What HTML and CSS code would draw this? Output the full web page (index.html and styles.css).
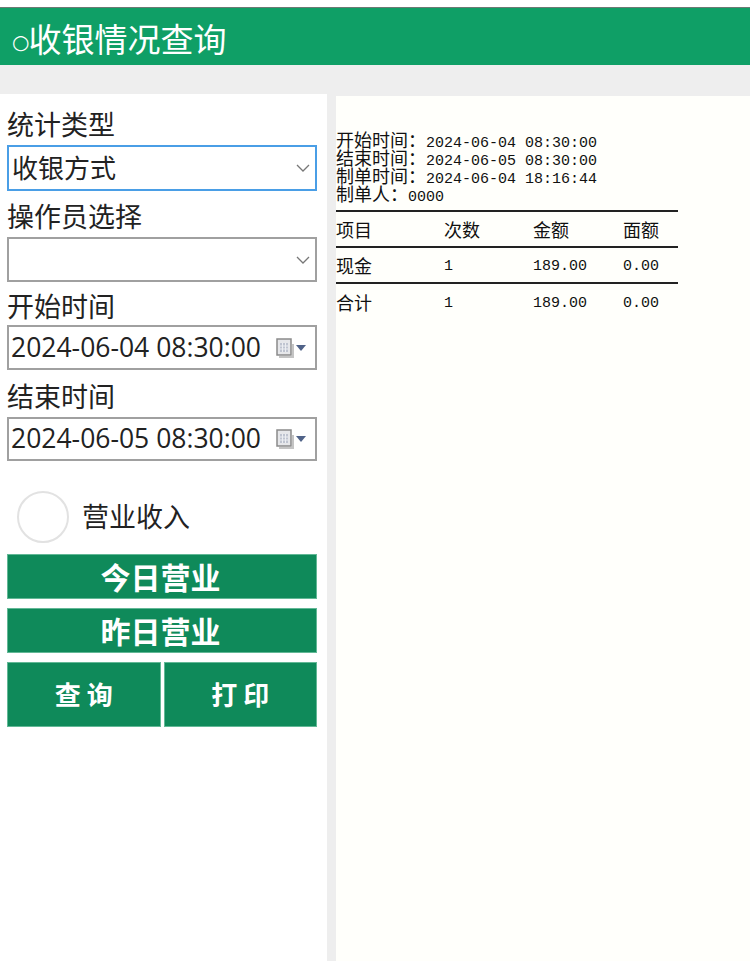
FILE: index.html
```html
<!DOCTYPE html>
<html lang="zh-CN">
<head>
<meta charset="utf-8">
<title>收银情况查询</title>
<link rel="stylesheet" href="styles.css">
</head>
<body>
<header class="title-bar"><span class="ring">○</span>收银情况查询</header>
<main class="content">
  <aside class="side">
    <label class="field-label">统计类型</label>
    <div class="control control-focus control-select">
      <span class="value">收银方式</span>
      <svg class="chevron" viewBox="0 0 14 8"><path d="M1 1l6 6 6-6" fill="none" stroke="#777" stroke-width="1.3"/></svg>
    </div>
    <label class="field-label">操作员选择</label>
    <div class="control control-select control-short">
      <span class="value"></span>
      <svg class="chevron" viewBox="0 0 14 8"><path d="M1 1l6 6 6-6" fill="none" stroke="#777" stroke-width="1.3"/></svg>
    </div>
    <label class="field-label field-label-tight">开始时间</label>
    <div class="control control-date control-short">
      <span class="value">2024-06-04 08:30:00</span>
      <svg class="cal" viewBox="0 0 32 20">
        <path d="M3 19h14V6" fill="none" stroke="#c4c4c4" stroke-width="2"/>
        <rect x="1" y="1" width="14" height="16" fill="#e6e7ea" stroke="#8a8a8a" stroke-width="1.500"/>
        <path d="M4 5h8v9H4z" fill="#bfc4d0"/>
        <path d="M6.500 5v9M9.500 5v9M4 8h8M4 11h8" stroke="#eceef2"/>
        <path d="M20 7h10l-5 6z" fill="#4f6288"/>
      </svg>
    </div>
    <label class="field-label field-label-wide">结束时间</label>
    <div class="control control-date control-tiny">
      <span class="value">2024-06-05 08:30:00</span>
      <svg class="cal" viewBox="0 0 32 20">
        <path d="M3 19h14V6" fill="none" stroke="#c4c4c4" stroke-width="2"/>
        <rect x="1" y="1" width="14" height="16" fill="#e6e7ea" stroke="#8a8a8a" stroke-width="1.500"/>
        <path d="M4 5h8v9H4z" fill="#bfc4d0"/>
        <path d="M6.500 5v9M9.500 5v9M4 8h8M4 11h8" stroke="#eceef2"/>
        <path d="M20 7h10l-5 6z" fill="#4f6288"/>
      </svg>
    </div>
    <div class="radio-row"><span class="radio"></span><span class="value">营业收入</span></div>
    <button class="btn btn-wide btn-first">今日营业</button>
    <button class="btn btn-wide">昨日营业</button>
    <div class="btn-pair">
      <button class="btn btn-small">查 询</button>
      <button class="btn btn-small">打 印</button>
    </div>
  </aside>
  <section class="report">
    <div class="meta">
      <div>开始时间：<span class="latin">2024-06-04 08:30:00</span></div>
      <div>结束时间：<span class="latin">2024-06-05 08:30:00</span></div>
      <div>制单时间：<span class="latin">2024-06-04 18:16:44</span></div>
      <div>制单人：<span class="latin">0000</span></div>
    </div>
    <table class="grid">
      <tr><td class="c1">项目</td><td class="c2">次数</td><td class="c3">金额</td><td>面额</td></tr>
      <tr><td>现金</td><td class="latin">1</td><td class="latin">189.00</td><td class="latin">0.00</td></tr>
      <tr><td>合计</td><td class="latin">1</td><td class="latin">189.00</td><td class="latin">0.00</td></tr>
    </table>
  </section>
</main>
</body>
</html>
```
FILE: styles.css
```css
* { box-sizing: border-box; }
html, body { margin: 0; height: 100%; }
body {
  width: 750px;
  height: 961px;
  overflow: hidden;
  background: #eeeeee;
  font-family: "Noto Sans CJK SC", "Noto Sans", sans-serif;
  color: #222;
  display: flex;
  flex-direction: column;
  border-top: 7px solid #fff;
}
.title-bar {
  height: 58px;
  flex: none;
  background: #0f9f66;
  border-top: 1px solid #6d7a74;
  color: #fff;
  font-size: 33px;
  line-height: 60px;
  padding-left: 12px;
  white-space: nowrap;
}
.ring { font-size: 20px; font-family: "DejaVu Sans", sans-serif; vertical-align: 3px; margin-right: -1px; }
.content {
  flex: 1;
  margin-top: 29px;
  display: flex;
  gap: 9px;
  min-height: 0;
}
.side {
  width: 327px;
  flex: none;
  background: #fff;
  padding: 5px 10px 0 7px;
  display: flex;
  flex-direction: column;
}
.field-label {
  height: 46px;
  font-size: 27px;
  line-height: 42px;
  display: flex;
  align-items: flex-end;
  white-space: nowrap;
}
.field-label-tight { height: 43px; line-height: 38px; }
.field-label-wide { height: 47px; line-height: 42px; }
.control {
  height: 46px;
  flex: none;
  border: 2px solid #a0a0a0;
  background: #fff;
  display: flex;
  align-items: center;
  justify-content: space-between;
  font-size: 26px;
}
.control-focus { border-color: #4a9ee6; }
.control-short { height: 45px; }
.control-tiny { height: 44px; }
.control-select { padding: 0 5px 0 3px; }
.control-select .value { padding-bottom: 4px; }
.control-date { padding: 0 7px 0 2px; font-family: "Open Sans", sans-serif; font-size: 26.500px; }
.control-date .value { padding-bottom: 2px; white-space: nowrap; }
.chevron { width: 14px; height: 8px; }
.cal { width: 32px; height: 20px; }
.radio-row {
  margin-top: 30px;
  height: 52px;
  padding-left: 10px;
  display: flex;
  align-items: center;
  gap: 13px;
  font-size: 27px;
  flex: none;
}
.radio-row .value { padding-bottom: 4px; }
.radio {
  width: 52px;
  height: 52px;
  border: 2px solid #e2e2e2;
  border-radius: 50%;
  background: #fff;
}
.btn {
  display: block;
  border: 1px solid #62b896;
  background: #0f8a5a;
  color: #fff;
  font-family: inherit;
  font-weight: 700;
  padding: 0 0 2px;
}
.btn-wide {
  width: 100%;
  height: 45px;
  font-size: 30px;
  line-height: 40px;
  margin-top: 9px;
  padding-right: 3px;
  flex: none;
}
.btn-first { margin-top: 11px; }
.btn-pair {
  display: flex;
  gap: 3px;
  margin-top: 9px;
  flex: none;
}
.btn-small { flex: 1; height: 65px; font-size: 26px; }
.report {
  flex: 1;
  margin-top: 2px;
  background: #fffffb;
  padding-top: 34px;
  font-size: 18px;
  color: #111;
}
.meta { line-height: 18px; }
.meta div { height: 18px; white-space: nowrap; }
.latin { font-family: "Liberation Mono", monospace; font-size: 15px; }
.grid {
  width: 342px;
  border-collapse: collapse;
  table-layout: fixed;
  margin-top: 8px;
  border-top: 2px solid #222;
}
.grid td { padding: 0; height: 36px; line-height: 32px; border-bottom: 2px solid #222; }
.grid td.latin { padding-top: 4px; line-height: 30px; }
.grid tr:last-child td { border-bottom: 0; }
.c1 { width: 108px; }
.c2 { width: 89px; }
.c3 { width: 90px; }
```
